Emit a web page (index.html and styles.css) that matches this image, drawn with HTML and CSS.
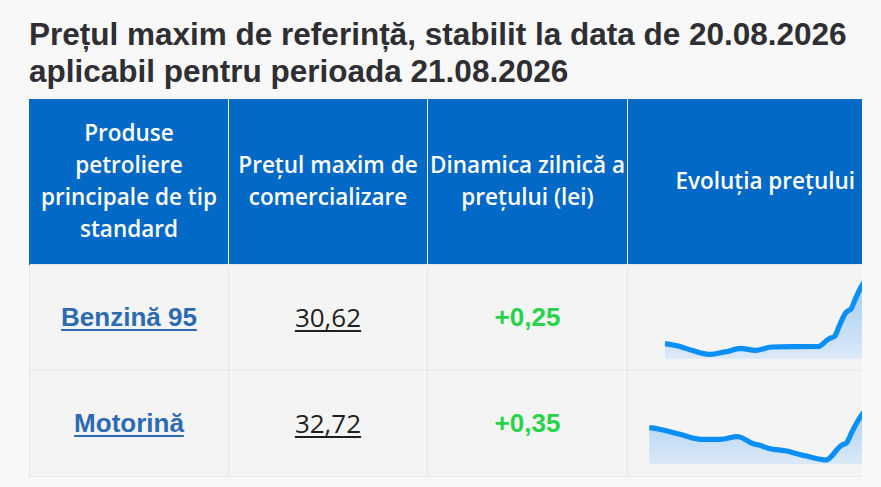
FILE: index.html
```html
<!DOCTYPE html>
<html lang="ro">
<head>
<meta charset="utf-8">
<title>Prețul maxim de referință</title>
<link rel="stylesheet" href="styles.css">
</head>
<body>
<div class="page">
  <h1 class="title">Prețul maxim de referință, stabilit la data de 20.08.2026 aplicabil pentru perioada 21.08.2026</h1>
  <div class="table-wrap">
    <table class="prices">
      <colgroup>
        <col class="c1"><col class="c2"><col class="c3"><col class="c4">
      </colgroup>
      <thead>
        <tr>
          <th>Produse petroliere principale de tip standard</th>
          <th>Prețul maxim de comercializare</th>
          <th>Dinamica zilnică a prețului (lei)</th>
          <th class="th-chart">Evoluția prețului</th>
        </tr>
      </thead>
      <tbody>
        <tr>
          <td><a class="product" href="#">Benzină 95</a></td>
          <td><a class="price" href="#">30,62</a></td>
          <td><span class="delta">+0,25</span></td>
          <td class="chart-cell">
            <svg class="chart" width="275" height="105" viewBox="0 0 275 105">
              <defs>
                <linearGradient id="g1" x1="0" y1="0" x2="0" y2="1">
                  <stop offset="0" stop-color="#9fcbf3"/>
                  <stop offset="1" stop-color="#dbe9f7"/>
                </linearGradient>
              </defs>
              <path d="M37 78.7 C44 79.5 45 80 50.3 81 C56 82.5 58 83.8 63.7 85.3 C72 87.8 76 89.5 82 89.3 C89 89 92 87.4 98.7 86.7 C104 85.8 107 83.3 112 83.3 C118 83.5 123 85.5 128.7 85.3 C134 85 138 82.2 143.7 82 L165.3 81.7 L191.3 81.3 C195 80 197 76 200.3 74.3 C203 72.5 205.5 73 207 71 C209 68 210 63 212 59.3 C214 55 216 49 218.7 46.7 C220.5 45 221.5 46 222.7 44.3 C225 41 226.5 35 228.7 31 C230.5 27 232 23.5 233.7 21 C236 17 238 14 240 12 L240 93.7 L37 93.7 Z" fill="url(#g1)"/>
              <path d="M37 78.7 C44 79.5 45 80 50.3 81 C56 82.5 58 83.8 63.7 85.3 C72 87.8 76 89.5 82 89.3 C89 89 92 87.4 98.7 86.7 C104 85.8 107 83.3 112 83.3 C118 83.5 123 85.5 128.7 85.3 C134 85 138 82.2 143.7 82 L165.3 81.7 L191.3 81.3 C195 80 197 76 200.3 74.3 C203 72.5 205.5 73 207 71 C209 68 210 63 212 59.3 C214 55 216 49 218.7 46.7 C220.5 45 221.5 46 222.7 44.3 C225 41 226.5 35 228.7 31 C230.5 27 232 23.5 233.7 21 C236 17 238 14 240 12" fill="none" stroke="#0a8ef8" stroke-width="5.2" stroke-linejoin="round"/>
            </svg>
          </td>
        </tr>
        <tr>
          <td><a class="product" href="#">Motorină</a></td>
          <td><a class="price" href="#">32,72</a></td>
          <td><span class="delta">+0,35</span></td>
          <td class="chart-cell">
            <svg class="chart" width="275" height="105" viewBox="0 0 275 105">
              <defs>
                <linearGradient id="g2" x1="0" y1="0" x2="0" y2="1">
                  <stop offset="0" stop-color="#a9d0f4"/>
                  <stop offset="1" stop-color="#dbe9f7"/>
                </linearGradient>
              </defs>
              <path d="M21.3 56.7 C28 57.2 30 58 35.3 59 C42 60.5 46 62 52 63.3 C60 65.5 65 67.8 72 68.3 L92 68.3 C99 68 104 65.5 110.3 65.7 C116 66.5 120 71 125.3 72.7 C128 73.7 130 73.5 132 74.3 C137 76 140 78 145.3 78.3 C150 78.8 154 79 158.7 80 C165 81.5 172 83.8 178.7 85 C185 86.5 192 88.8 198.7 89 C201.5 88 203 85.5 205.3 83.3 C208 80 210.5 76 213.7 74.3 C216 73 217 73.5 218.7 71.7 C221 68.5 223 62 225.3 58.3 C228 53 231 47.5 233.7 44 C236 41 238 39 240 38 L240 93.3 L21.3 93.3 Z" fill="url(#g2)"/>
              <path d="M21.3 56.7 C28 57.2 30 58 35.3 59 C42 60.5 46 62 52 63.3 C60 65.5 65 67.8 72 68.3 L92 68.3 C99 68 104 65.5 110.3 65.7 C116 66.5 120 71 125.3 72.7 C128 73.7 130 73.5 132 74.3 C137 76 140 78 145.3 78.3 C150 78.8 154 79 158.7 80 C165 81.5 172 83.8 178.7 85 C185 86.5 192 88.8 198.7 89 C201.5 88 203 85.5 205.3 83.3 C208 80 210.5 76 213.7 74.3 C216 73 217 73.5 218.7 71.7 C221 68.5 223 62 225.3 58.3 C228 53 231 47.5 233.7 44 C236 41 238 39 240 38" fill="none" stroke="#0a8ef8" stroke-width="5.2" stroke-linejoin="round"/>
            </svg>
          </td>
        </tr>
      </tbody>
    </table>
  </div>
</div>
</body>
</html>
```

FILE: styles.css
```css
html, body {
  margin: 0;
  padding: 0;
  background: #f8f8f8;
}

.page {
  padding: 16px 0 0 29px;
}

.title {
  margin: 0 0 9px 0;
  width: 840px;
  font-family: "Liberation Sans", Arial, sans-serif;
  font-weight: 700;
  font-size: 31.5px;
  line-height: 37px;
  color: #2e2e33;
}

.table-wrap {
  width: 833px;
  overflow: hidden;
}

.prices {
  border-collapse: collapse;
  table-layout: fixed;
  width: 873px;
}

.c1 { width: 199px; }
.c2 { width: 199px; }
.c3 { width: 200px; }
.c4 { width: 275px; }

.prices th {
  height: 165px;
  box-sizing: border-box;
  padding: 0;
  background: #0369c7;
  color: #ffffff;
  font-family: "Open Sans", sans-serif;
  font-weight: 600;
  font-size: 22.5px;
  line-height: 32px;
  text-align: center;
  vertical-align: middle;
  border-left: 1px solid #ffffff;
}

.prices th:first-child {
  border-left: 1px solid #0369c7;
}

.prices td {
  height: 106px;
  box-sizing: border-box;
  padding: 0;
  background: #f4f4f4;
  border: 1px solid #e6e7eb;
  text-align: center;
  vertical-align: middle;
}

.product {
  font-family: "Liberation Sans", Arial, sans-serif;
  font-weight: 700;
  font-size: 26px;
  color: #2c6bb4;
  text-decoration: underline;
  text-decoration-thickness: 2px;
  text-underline-offset: 3px;
}

.price {
  font-family: "Open Sans", sans-serif;
  font-weight: 400;
  font-size: 26px;
  color: #1f1f22;
  text-decoration: underline;
  text-decoration-thickness: 2px;
  text-underline-offset: 3px;
}

.delta {
  font-family: "Liberation Sans", Arial, sans-serif;
  font-weight: 700;
  font-size: 26px;
  color: #27d447;
}

.chart-cell {
  position: relative;
}

.chart {
  display: block;
}
```
